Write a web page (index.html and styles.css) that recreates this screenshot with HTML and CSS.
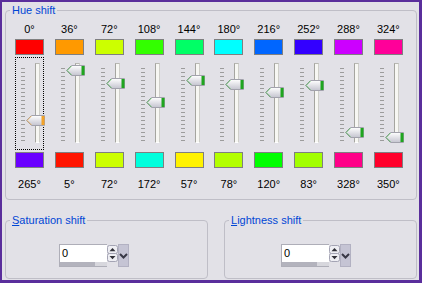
FILE: index.html
```html
<!DOCTYPE html>
<html>
<head>
<meta charset="utf-8">
<link rel="stylesheet" href="styles.css">
</head>
<body>
<svg class="defs" width="0" height="0" aria-hidden="true">
  <defs>
    <linearGradient id="tg" x1="0" y1="0" x2="0" y2="1">
      <stop offset="0" stop-color="#ffffff"/>
      <stop offset="1" stop-color="#c4c4cf"/>
    </linearGradient>
    <symbol id="thumb" viewBox="0 0 19 11">
      <path d="M0.5 5.5 L5.5 0.5 H18.5 V10.5 H5.5 Z" fill="url(#tg)" stroke="#a2a2ac"/>
      <path d="M5.5 1 L1.2 5.5 L5.5 10" fill="none" stroke="currentColor" stroke-opacity="0.6"/>
      <rect x="15.5" y="1" width="3" height="9" fill="currentColor"/>
    </symbol>
  </defs>
</svg>
<div class="win">
  <div class="group hue">
    <div class="gtitle">Hue shift</div>
    <div class="cols">
      <div class="col">
        <div class="lbl">0°</div>
        <div class="sw top" style="background:#ff0000"></div>
        <div class="slider focus"><div class="ticks"></div><div class="track"></div><svg class="thumb hot" style="top:57px" width="19" height="11"><use href="#thumb"/></svg></div>
        <div class="sw bot" style="background:#6a00ff"></div>
        <div class="lbl bot">265°</div>
      </div>
      <div class="col">
        <div class="lbl">36°</div>
        <div class="sw top" style="background:#ff9900"></div>
        <div class="slider"><div class="ticks"></div><div class="track"></div><svg class="thumb" style="top:7px" width="19" height="11"><use href="#thumb"/></svg></div>
        <div class="sw bot" style="background:#ff1500"></div>
        <div class="lbl bot">5°</div>
      </div>
      <div class="col">
        <div class="lbl">72°</div>
        <div class="sw top" style="background:#ccff00"></div>
        <div class="slider"><div class="ticks"></div><div class="track"></div><svg class="thumb" style="top:20px" width="19" height="11"><use href="#thumb"/></svg></div>
        <div class="sw bot" style="background:#ccff00"></div>
        <div class="lbl bot">72°</div>
      </div>
      <div class="col">
        <div class="lbl">108°</div>
        <div class="sw top" style="background:#33ff00"></div>
        <div class="slider"><div class="ticks"></div><div class="track"></div><svg class="thumb" style="top:39px" width="19" height="11"><use href="#thumb"/></svg></div>
        <div class="sw bot" style="background:#00ffdd"></div>
        <div class="lbl bot">172°</div>
      </div>
      <div class="col">
        <div class="lbl">144°</div>
        <div class="sw top" style="background:#00ff66"></div>
        <div class="slider"><div class="ticks"></div><div class="track"></div><svg class="thumb" style="top:17px" width="19" height="11"><use href="#thumb"/></svg></div>
        <div class="sw bot" style="background:#fff200"></div>
        <div class="lbl bot">57°</div>
      </div>
      <div class="col">
        <div class="lbl">180°</div>
        <div class="sw top" style="background:#00ffff"></div>
        <div class="slider"><div class="ticks"></div><div class="track"></div><svg class="thumb" style="top:21px" width="19" height="11"><use href="#thumb"/></svg></div>
        <div class="sw bot" style="background:#b3ff00"></div>
        <div class="lbl bot">78°</div>
      </div>
      <div class="col">
        <div class="lbl">216°</div>
        <div class="sw top" style="background:#0066ff"></div>
        <div class="slider"><div class="ticks"></div><div class="track"></div><svg class="thumb" style="top:29px" width="19" height="11"><use href="#thumb"/></svg></div>
        <div class="sw bot" style="background:#00ff00"></div>
        <div class="lbl bot">120°</div>
      </div>
      <div class="col">
        <div class="lbl">252°</div>
        <div class="sw top" style="background:#3300ff"></div>
        <div class="slider"><div class="ticks"></div><div class="track"></div><svg class="thumb" style="top:22px" width="19" height="11"><use href="#thumb"/></svg></div>
        <div class="sw bot" style="background:#a2ff00"></div>
        <div class="lbl bot">83°</div>
      </div>
      <div class="col">
        <div class="lbl">288°</div>
        <div class="sw top" style="background:#cc00ff"></div>
        <div class="slider"><div class="ticks"></div><div class="track"></div><svg class="thumb" style="top:69px" width="19" height="11"><use href="#thumb"/></svg></div>
        <div class="sw bot" style="background:#ff0088"></div>
        <div class="lbl bot">328°</div>
      </div>
      <div class="col">
        <div class="lbl">324°</div>
        <div class="sw top" style="background:#ff0099"></div>
        <div class="slider"><div class="ticks"></div><div class="track"></div><svg class="thumb" style="top:74px" width="19" height="11"><use href="#thumb"/></svg></div>
        <div class="sw bot" style="background:#ff002b"></div>
        <div class="lbl bot">350°</div>
      </div>
    </div>
  </div>
  <div class="bottom">
    <div class="group sat">
      <div class="gtitle"><u>S</u>aturation shift</div>
      <div class="spin">
        <div class="edit"><div class="val">0</div><div class="bar"></div></div>
        <div class="arrows">
          <svg width="11" height="17" viewBox="0 0 11 17">
            <rect x="0.5" y="0.5" width="10" height="8" rx="2" fill="#eeeef3" stroke="#a4a4b4"/>
            <path d="M2.5 6.2 L5.5 3 L8.5 6.2 Z" fill="#303038"/>
            <rect x="0.5" y="8.5" width="10" height="8" rx="2" fill="#eeeef3" stroke="#a4a4b4"/>
            <path d="M2.5 11 L5.5 14.2 L8.5 11 Z" fill="#303038"/>
          </svg>
        </div>
        <div class="drop"><svg width="9" height="6" viewBox="0 0 9 6"><path d="M1 1 L4.5 4.5 L8 1" fill="none" stroke="#383846" stroke-width="2"/></svg></div>
      </div>
    </div>
    <div class="group light">
      <div class="gtitle"><u>L</u>ightness shift</div>
      <div class="spin">
        <div class="edit"><div class="val">0</div><div class="bar"></div></div>
        <div class="arrows">
          <svg width="11" height="17" viewBox="0 0 11 17">
            <rect x="0.5" y="0.5" width="10" height="8" rx="2" fill="#eeeef3" stroke="#a4a4b4"/>
            <path d="M2.5 6.2 L5.5 3 L8.5 6.2 Z" fill="#303038"/>
            <rect x="0.5" y="8.5" width="10" height="8" rx="2" fill="#eeeef3" stroke="#a4a4b4"/>
            <path d="M2.5 11 L5.5 14.2 L8.5 11 Z" fill="#303038"/>
          </svg>
        </div>
        <div class="drop"><svg width="9" height="6" viewBox="0 0 9 6"><path d="M1 1 L4.5 4.5 L8 1" fill="none" stroke="#383846" stroke-width="2"/></svg></div>
      </div>
    </div>
  </div>
</div>
</body>
</html>
```
FILE: styles.css
```css
* { box-sizing: border-box; }
html, body { margin: 0; padding: 0; }
body {
  width: 422px;
  height: 283px;
  overflow: hidden;
  font-family: "Liberation Sans", Arial, sans-serif;
  font-size: 11px;
  color: #000;
}
.defs { position: absolute; width: 0; height: 0; overflow: hidden; }

.win {
  width: 422px;
  height: 283px;
  border-style: solid;
  border-color: #5a2e9c;
  border-width: 2px 3px 3px 2px;
  background: #e2e1e7;
  display: flex;
  flex-direction: column;
}

.group {
  border: 1px solid #bfbec7;
  border-radius: 4px;
  display: flex;
  flex-direction: column;
}
.gtitle {
  align-self: flex-start;
  margin: -7px 0 0 4px;
  padding: 0 2px;
  height: 13px;
  line-height: 13px;
  background: #e2e1e7;
  color: #0046d5;
  white-space: nowrap;
}

.hue {
  margin: 8px 0 0 3px;
  width: 412px;
  height: 190px;
}
.cols {
  display: flex;
  justify-content: space-between;
  margin-top: 6px;
  padding: 0 13px 0 9px;
}
.col {
  width: 29px;
  display: flex;
  flex-direction: column;
}
.lbl {
  height: 13px;
  line-height: 13px;
  text-align: center;
  white-space: nowrap;
  margin: 0 -6px;
}
.lbl.bot { margin-top: 10px; }
.sw {
  height: 16px;
  border: 1px solid #7f7f80;
}
.sw.top { margin-top: 3px; }
.sw.bot { margin-top: 2px; }

.slider {
  position: relative;
  margin-top: 2px;
  height: 93px;
  border: 1px dotted transparent;
  display: flex;
  align-items: flex-start;
  padding-left: 5px;
}
.slider.focus { border-color: #000; }
.ticks {
  width: 4px;
  height: 73px;
  margin-top: 10px;
  background: repeating-linear-gradient(to bottom, #9c9c9c 0 1px, transparent 1px 4px);
}
.track {
  width: 5px;
  height: 80px;
  margin-top: 5px;
  margin-left: 10px;
  background: #f7f7f3;
  border-left: 1px solid #a5a5a0;
  border-right: 1px solid #cfcfca;
  border-top: 1px solid #b8b8b3;
  border-bottom: 1px solid #ffffff;
}
.thumb {
  position: absolute;
  left: 10px;
  color: #1fa51f;
}
.thumb.hot { color: #f2a22a; }

.bottom {
  display: flex;
  margin-top: 20px;
}
.sat {
  margin-left: 3px;
  width: 203px;
  height: 59px;
}
.light {
  margin-left: 16px;
  width: 193px;
  height: 59px;
}

.spin {
  align-self: flex-start;
  display: flex;
  height: 23px;
  margin: 17px 0 0 53px;
}
.light .spin { margin-left: 56px; }
.edit {
  width: 48px;
  display: flex;
  flex-direction: column;
  border: 1px solid #aeaeb8;
  border-right: 0;
}
.val {
  height: 17px;
  line-height: 17px;
  background: #fff;
  padding-left: 2px;
}
.bar {
  height: 4px;
  background: linear-gradient(to right, #b3b3bd 0 35px, #d7d7dd 35px);
}
.arrows {
  width: 11px;
  padding-top: 1px;
  display: flex;
  flex-direction: column;
}
.arrows svg { display: block; }
.drop {
  width: 11px;
  background: #c5c4d4;
  border: 1px solid #b2b1c2;
  display: flex;
  align-items: center;
  justify-content: center;
}
.drop svg { display: block; }
```
